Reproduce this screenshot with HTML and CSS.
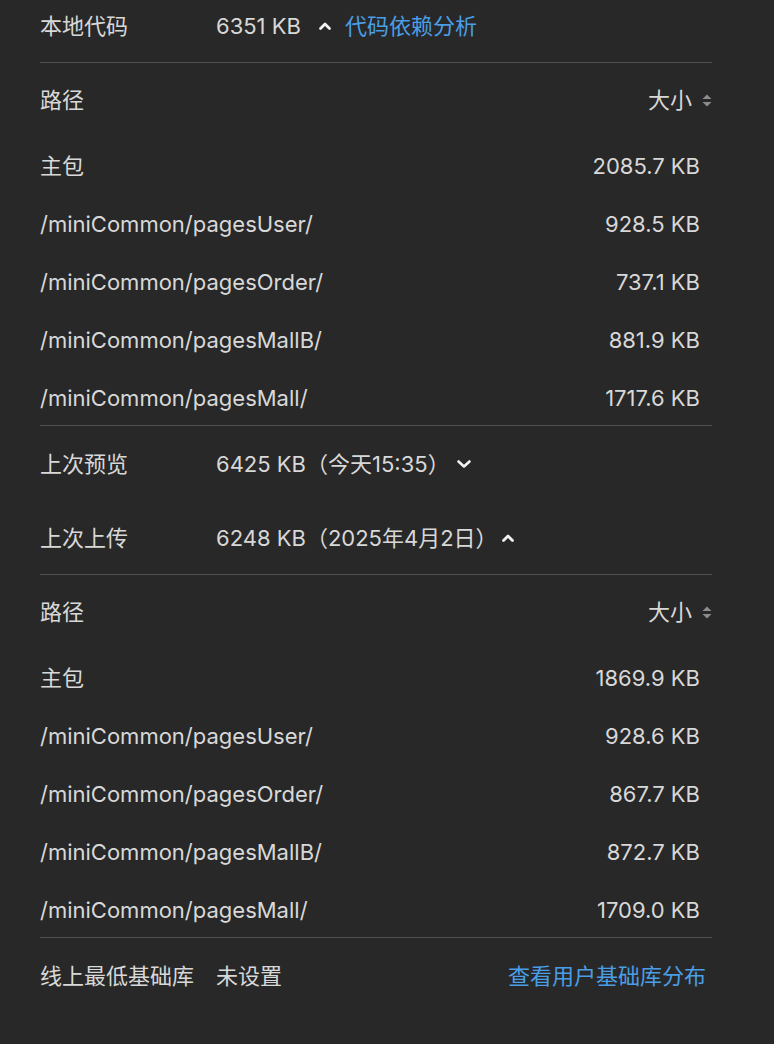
FILE: index.html
```html
<!DOCTYPE html>
<html lang="zh-CN">
<head>
<meta charset="utf-8">
<title>代码包大小</title>
<link rel="stylesheet" href="styles.css">
</head>
<body>
<div class="panel">
  <div class="info-row top">
    <span class="label">本地代码</span>
    <span class="value">6351 KB</span>
    <svg class="chev" width="14" height="10" viewBox="0 0 14 10"><path d="M2.5 7.5 L7 3 L11.5 7.5" fill="none" stroke="#f2f2f2" stroke-width="2.8" stroke-linecap="round" stroke-linejoin="round"/></svg>
    <a class="link">代码依赖分析</a>
  </div>
  <div class="divider"></div>
  <div class="table">
    <div class="thead">
      <span>路径</span>
      <span class="sort">大小<svg width="10" height="16" viewBox="0 0 10 16"><path d="M5 2.5 L9.5 7 H0.5 Z M5 14.5 L9.5 10 H0.5 Z" fill="#8c8c8c"/></svg></span>
    </div>
    <div class="trow"><span>主包</span><span class="size">2085.7 KB</span></div>
    <div class="trow"><span>/miniCommon/pagesUser/</span><span class="size">928.5 KB</span></div>
    <div class="trow"><span>/miniCommon/pagesOrder/</span><span class="size">737.1 KB</span></div>
    <div class="trow"><span>/miniCommon/pagesMallB/</span><span class="size">881.9 KB</span></div>
    <div class="trow"><span>/miniCommon/pagesMall/</span><span class="size">1717.6 KB</span></div>
  </div>
  <div class="divider"></div>
  <div class="info-row preview">
    <span class="label">上次预览</span>
    <span class="value">6425 KB（今天15:35）</span>
    <svg class="chev" width="16" height="10" viewBox="0 0 16 10"><path d="M2.5 2.5 L8 7.5 L13.5 2.5" fill="none" stroke="#f2f2f2" stroke-width="2.6" stroke-linecap="round" stroke-linejoin="round"/></svg>
  </div>
  <div class="info-row upload">
    <span class="label">上次上传</span>
    <span class="value">6248 KB（2025年4月2日）</span>
    <svg class="chev" width="14" height="10" viewBox="0 0 14 10"><path d="M2.5 7.5 L7 3 L11.5 7.5" fill="none" stroke="#f2f2f2" stroke-width="2.8" stroke-linecap="round" stroke-linejoin="round"/></svg>
  </div>
  <div class="divider"></div>
  <div class="table">
    <div class="thead">
      <span>路径</span>
      <span class="sort">大小<svg width="10" height="16" viewBox="0 0 10 16"><path d="M5 2.5 L9.5 7 H0.5 Z M5 14.5 L9.5 10 H0.5 Z" fill="#8c8c8c"/></svg></span>
    </div>
    <div class="trow"><span>主包</span><span class="size">1869.9 KB</span></div>
    <div class="trow"><span>/miniCommon/pagesUser/</span><span class="size">928.6 KB</span></div>
    <div class="trow"><span>/miniCommon/pagesOrder/</span><span class="size">867.7 KB</span></div>
    <div class="trow"><span>/miniCommon/pagesMallB/</span><span class="size">872.7 KB</span></div>
    <div class="trow"><span>/miniCommon/pagesMall/</span><span class="size">1709.0 KB</span></div>
  </div>
  <div class="divider"></div>
  <div class="info-row bottom">
    <span class="label">线上最低基础库</span>
    <span class="value">未设置</span>
    <a class="link right">查看用户基础库分布</a>
  </div>
</div>
</body>
</html>
```

FILE: styles.css
```css
html, body {
  margin: 0;
  padding: 0;
  background: #282828;
}
body {
  font-family: "Inter", "Noto Sans CJK SC", sans-serif;
  font-size: 22px;
  line-height: 30px;
  color: #d8d8d8;
}
.panel {
  width: 672px;
  margin-left: 40px;
}
.info-row {
  display: flex;
  align-items: center;
}
.info-row .label {
  width: 176px;
  flex: none;
}
.info-row.top {
  height: 52px;
  margin-bottom: 10px;
}
.info-row.top .chev {
  margin-left: 17px;
  margin-right: 13px;
}
.info-row.preview {
  height: 76px;
}
.info-row.preview .chev {
  margin-left: 6px;
}
.info-row.upload {
  height: 72px;
}
.info-row.upload .chev {
  margin-left: 3px;
}
.info-row.bottom {
  height: 76px;
}
.link {
  color: #4a9ee6;
}
.link.right {
  margin-left: auto;
  margin-right: 6px;
}
.divider {
  height: 1px;
  background: #505050;
}
.thead {
  height: 70px;
  padding-top: 2px;
  display: flex;
  align-items: center;
  justify-content: space-between;
}
.sort {
  display: flex;
  align-items: center;
  gap: 10px;
}
.trow {
  height: 54px;
  padding-top: 4px;
  display: flex;
  align-items: center;
  justify-content: space-between;
  padding-right: 12px;
}
```
